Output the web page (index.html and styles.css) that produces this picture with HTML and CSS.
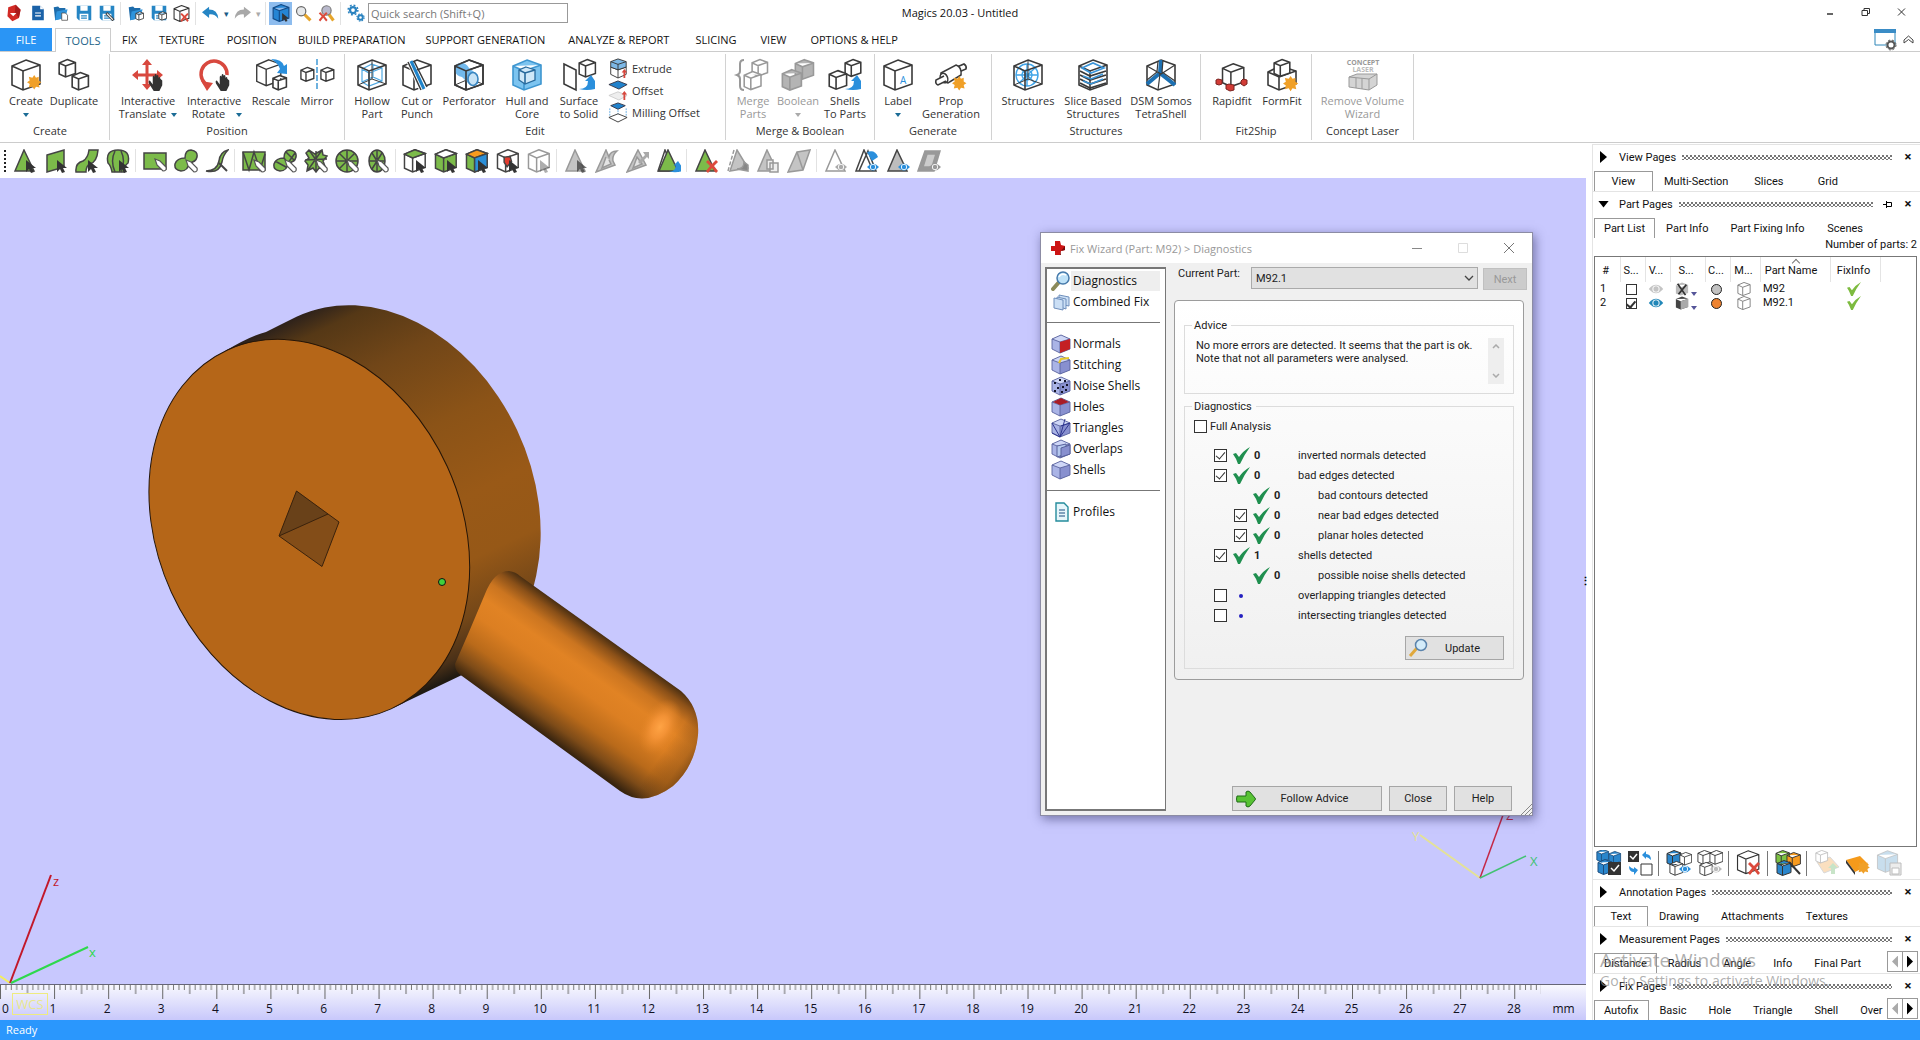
FILE: index.html
```html
<!DOCTYPE html>
<html lang="en">
<head>
<meta charset="utf-8">
<title>Magics 20.03 - Untitled</title>
<link rel="stylesheet" href="styles.css">
</head>
<body>
<svg class="defs" aria-hidden="true">
  <defs>
    <path id="cube" d="M16 1L30 6V25L13 31L2 26V7ZM2 7L13 12L30 6M13 12V31"/>
    <path id="cube-top" d="M16 1L30 6L13 12L2 7Z"/>
    <path id="cube-left" d="M2 7L13 12V31L2 26Z"/>
    <path id="cube-right" d="M13 12L30 6V25L13 31Z"/>
    <path id="cursor" d="M0 0V12L3 9L5 13L8 12L6 8H10Z" fill="#333" stroke="none"/>
    <path id="pen" d="M0 0L2 6L8 12Q12 12 11 8L5 2Z" fill="#fff" stroke="#555" stroke-width="1.2"/>
    <path id="star" d="M8 0L10 3L13 2L13 6L16 8L13 10L14 14L10 13L8 16L6 13L2 14L3 10L0 8L3 6L2 2L6 3Z" fill="#f0a028" stroke="none"/>
    <path id="swoosh" d="M0 14Q9 14 9 6H6L12 0L16 6V14Q8 16 0 14Z" fill="#2a8fdc" stroke="none"/>
    <path id="hand" d="M2 8L5 12V4Q6 2 7 4V9V2Q8 0 9 2V9V3Q11 1 11 4V9V5Q13 3 13 6L15 8V13L12 19H6L1 11Q0 8 2 8Z" fill="#333" stroke="none"/>
    <g id="eye"><path d="M0 5Q6 -2 12 5Q6 12 0 5Z"/><circle cx="6" cy="5" r="3" fill="#fff"/><circle cx="6" cy="5" r="2.2"/></g>
    <path id="cross" d="M0 2L2 0L6 4L10 0L12 2L8 6L12 11L10 13L6 8L2 13L0 11L4 6Z" fill="#dc4a3c" stroke="none"/>
    <path id="tri" d="M11 1L21 22H2Z"/>
    <g id="floppy"><path d="M1 1H21V21H4L1 18Z" fill="#2585c4"/><path d="M6 1H16V8H6ZM5 12H17V21H5Z" fill="#fff"/><path d="M7 15H15M7 18H15" stroke="#2585c4" stroke-width="1.5"/></g>
    <g id="folder"><path d="M1 3L7 2L9 4H17V8L11 19L3 21Z" fill="#1d6cab"/><path d="M5 9L20 6L17 18L3 21Z" fill="#2f94dc"/></g>
    <path id="tick" d="M0 7L3 6L6 10Q10 4 17 0Q11 8 7 17H5Q3 11 0 7Z"/>
    <g id="wizcube"><path d="M10 1L19 5V15L9 19L1 15V5Z" fill="#aab4e6"/><path d="M10 1L19 5L9 8L1 5Z" fill="#ced6f6"/><path d="M9 8L19 5V15L9 19Z" fill="#8890cf"/><path d="M10 1L19 5V15L9 19L1 15V5ZM1 5L9 8L19 5M9 8V19" fill="none" stroke="#59629d" stroke-width=".9"/></g>
    <g id="lens"><path d="M9 10L2 18" stroke="#8b8a5a" stroke-width="4" stroke-linecap="round"/><circle cx="12" cy="7" r="6" fill="#bfe2f8" stroke="#477aab" stroke-width="1.5"/><path d="M8 6Q10 2 15 4" fill="none" stroke="#fff" stroke-width="1.5"/></g>
  </defs>
</svg>

<div class="app">
  <header class="titlebar">
    <div class="quick">
      <span class="app-icon"><svg width="18" height="18" viewBox="0 0 22 22"><path d="M4 4L13 1L19 7L17 17L9 21L3 15Z" fill="#d22a25"/><path d="M13 1L19 7L17 17L12 10Z" fill="#a81b1b"/><path d="M6 11H14L10 15Z" fill="#fff"/></svg></span>
      <button class="qb" aria-label="New"><svg width="16" height="16" viewBox="0 0 22 22"><path d="M3 1H14L19 6V21H3Z" fill="#1b62a8"/><path d="M14 1V6H19" fill="#fff"/><path d="M7 11H15M7 15H15" stroke="#fff" stroke-width="1.6"/></svg></button>
      <button class="qb" aria-label="Open"><svg width="16" height="16" viewBox="0 0 22 22"><use href="#folder"/><path d="M12 11H17L20 14V21H12Z" fill="#fff" stroke="#444"/></svg></button>
      <button class="qb" aria-label="Save"><svg width="16" height="16" viewBox="0 0 22 22"><use href="#floppy"/></svg></button>
      <button class="qb" aria-label="Save as"><svg width="16" height="16" viewBox="0 0 22 22"><use href="#floppy"/><path d="M10 11L20 21" stroke="#444" stroke-width="4"/><path d="M11 12L19 20" stroke="#fff" stroke-width="1.5"/></svg></button>
      <i class="vsep"></i>
      <button class="qb" aria-label="Import part"><svg width="16" height="16" viewBox="0 0 22 22"><use href="#folder"/><use href="#cube" transform="translate(10 9) scale(.38)" fill="#fff" stroke="#333" stroke-width="3"/></svg></button>
      <button class="qb" aria-label="Save part"><svg width="16" height="16" viewBox="0 0 22 22"><use href="#floppy"/><use href="#cube" transform="translate(10 9) scale(.38)" fill="#fff" stroke="#333" stroke-width="3"/></svg></button>
      <button class="qb" aria-label="Unload part"><svg width="17" height="17" viewBox="0 0 32 32"><use href="#cube" fill="#fff" stroke="#333" stroke-width="2"/><use href="#cross" transform="translate(14 15) scale(1.3)"/></svg></button>
      <i class="vsep"></i>
      <button class="qb" aria-label="Undo"><svg width="17" height="14" viewBox="0 0 24 18"><path d="M0 8L10 0V4Q22 4 23 17Q18 10 10 11V16Z" fill="#2585c4"/></svg></button><span class="qcaret">▾</span>
      <button class="qb" aria-label="Redo"><svg width="17" height="14" viewBox="0 0 24 18"><path d="M24 8L14 0V4Q2 4 1 17Q6 10 14 11V16Z" fill="#a8a8a8"/></svg></button><span class="qcaret off">▾</span>
      <i class="vsep"></i>
      <button class="qb on" aria-label="Select parts"><svg width="18" height="18" viewBox="0 0 32 32"><use href="#cube" fill="#2585d4" stroke="#134a86" stroke-width="2"/><use href="#cursor" transform="translate(18 16) scale(1.2)"/></svg></button>
      <button class="qb" aria-label="Zoom"><svg width="17" height="17" viewBox="0 0 22 22"><path d="M12 12L20 20" stroke="#e6a52c" stroke-width="4"/><circle cx="8" cy="8" r="6" fill="#e6e8ea" stroke="#666" stroke-width="1.5"/></svg></button>
      <button class="qb" aria-label="Unzoom"><svg width="17" height="17" viewBox="0 0 22 22"><path d="M14 12L20 20" stroke="#e6a52c" stroke-width="4"/><circle cx="11" cy="7" r="6" fill="#b9b9cc" stroke="#777" stroke-width="1.5"/><use href="#cross" transform="translate(1 9) scale(.95)"/></svg></button>
      <i class="vsep"></i>
      <button class="qb" aria-label="Settings"><svg width="18" height="18" viewBox="0 0 24 24"><g fill="none" stroke="#2b83c0"><circle cx="8" cy="8" r="4" stroke-width="3"/><circle cx="8" cy="8" r="6.500" stroke-width="2" stroke-dasharray="2.500 2.600"/><circle cx="18" cy="18" r="3" stroke-width="2.500"/><circle cx="18" cy="18" r="4.800" stroke-width="1.600" stroke-dasharray="2 1.800"/></g></svg></button>
      <input class="search" type="text" placeholder="Quick search (Shift+Q)" aria-label="Quick search">
    </div>
    <div class="title">Magics 20.03 - Untitled</div>
    <div class="winbtns">
      <button aria-label="Minimize"><svg width="10" height="10"><path d="M2 7H8" stroke="#333" stroke-width="1.5"/></svg></button>
      <button aria-label="Restore"><svg width="10" height="10" fill="none" stroke="#333"><path d="M1 3.500H6.500V8.500H1ZM3 3V1.500H8.500V6.500H7"/></svg></button>
      <button aria-label="Close window"><svg width="10" height="10" stroke="#333"><path d="M1 1.500L8 8.500M8 1.500L1 8.500"/></svg></button>
    </div>
  </header>

  <nav class="tabs">
    <button class="file">FILE</button>
    <button class="tab active">TOOLS</button>
    <button class="tab">FIX</button>
    <button class="tab">TEXTURE</button>
    <button class="tab">POSITION</button>
    <button class="tab long">BUILD PREPARATION</button>
    <button class="tab long">SUPPORT GENERATION</button>
    <button class="tab late">ANALYZE &amp; REPORT</button>
    <button class="tab late">SLICING</button>
    <button class="tab">VIEW</button>
    <button class="tab late">OPTIONS &amp; HELP</button>
    <div class="tab-tools">
      <svg width="23" height="24" viewBox="0 0 23 24"><path d="M1 2H21V17H1Z" fill="#fff" stroke="#2f86b8"/><path d="M0 1H22V5H0Z" fill="#3a8cc6"/><circle cx="17" cy="17" r="3.500" fill="#fff" stroke="#555" stroke-width="2"/><circle cx="17" cy="17" r="5" fill="none" stroke="#555" stroke-dasharray="2 2"/></svg>
      <svg width="11" height="10" viewBox="0 0 11 10"><path d="M1 5L5.500 1L10 5V8L5.500 4.500L1 8Z" fill="none" stroke="#444"/></svg>
    </div>
  </nav>

  <section class="ribbon">
    <div class="group first"><div class="row">
      <button class="rb w48"><svg viewBox="0 0 32 32"><use href="#cube"/><use href="#star" transform="translate(17 16) scale(.9)"/></svg><span>Create<br><i class="caret"></i></span></button>
      <button class="rb w48"><svg viewBox="0 0 32 32"><use href="#cube" transform="scale(.58)" stroke-width="2.800"/><use href="#cube" transform="translate(13 13) scale(.58)" stroke-width="2.800"/></svg><span>Duplicate</span></button>
    </div><h2>Create</h2></div>

    <div class="group"><div class="row">
      <button class="rb w66"><svg viewBox="0 0 32 32"><path d="M15 0L20 6H16.500V14.500H25V11L31 16L25 21V17.500H16.500V25H20L15 31L10 25H13.500V17.500H6V21L0 16L6 11V14.500H13.500V6H10Z" fill="#d8483e" stroke="none"/><use href="#hand" transform="translate(16 14) scale(.95)"/></svg><span>Interactive<br>Translate<i class="caret inline"></i></span></button>
      <button class="rb w66"><svg viewBox="0 0 32 32"><path d="M11 27A13 13 0 1 1 29 16" fill="none" stroke="#d8483e" stroke-width="3.500"/><path d="M3 22L15 24L9 32Z" fill="#d8483e" stroke="none"/><use href="#hand" transform="translate(17 14) scale(.95)"/></svg><span>Interactive<br>&nbsp; Rotate &nbsp;<i class="caret inline"></i></span></button>
      <button class="rb w48"><svg viewBox="0 0 32 32"><use href="#cube" transform="scale(.86)"/><use href="#cube" transform="translate(17 16) scale(.48)" stroke-width="3.300"/><path d="M16 0Q27 0 29 7L32 5V15L22 14L25 10Q23 4 16 0Z" fill="#2a8fdc" stroke="none"/></svg><span>Rescale</span></button>
      <button class="rb w44"><svg viewBox="0 0 32 32"><use href="#cube" transform="translate(-1 8) scale(.46)" stroke-width="3"/><use href="#cube" transform="translate(19 8) scale(.46)" stroke-width="3"/><path d="M16 0V32" stroke="#4a9fd8" stroke-dasharray="6 2"/></svg><span>Mirror</span></button>
    </div><h2>Position</h2></div>

    <div class="group"><div class="row">
      <button class="rb w44"><svg viewBox="0 0 32 32"><g fill="none" stroke="#4fa8e2" stroke-width="1.200"><path d="M16 5L26 9V22L13 27L6 23V10ZM6 10L13 14L26 9M13 14V27M6 23L17 18L26 22M17 18V5"/></g><use href="#cube" fill="none"/><path d="M2 26L16 20L30 25M16 20V1" fill="none" stroke-width="1"/></svg><span>Hollow<br>Part</span></button>
      <button class="rb w46"><svg viewBox="0 0 32 32"><use href="#cube"/><path d="M5 2L18 31H27L11 2Z" fill="#fff" stroke="none"/><path d="M7 3L20 31M13 2L26 28" stroke-width="1.500"/><path d="M10 2L23 30" stroke="#1f84ca" stroke-width="3"/></svg><span>Cut or<br>Punch</span></button>
      <button class="rb w58"><svg viewBox="0 0 32 32"><use href="#cube"/><path d="M2 26L16 20L30 25" fill="none" stroke-width="1"/><path d="M4 5Q12 2 16 9L25 16V25L17 26L9 18Q3 17 2 12Z" fill="#72b9ec" stroke="none"/><ellipse cx="20" cy="20" rx="5" ry="6.500" fill="#c7e3f6" stroke="#3a86c0"/><use href="#cube" fill="none"/></svg><span>Perforator</span></button>
      <button class="rb w58"><svg viewBox="0 0 32 32"><use href="#cube" fill="#7cc4f0" stroke="#3e96d0"/><path d="M15 8L24 11V21L14 25L8 21V11Z" fill="#cfe8f8" stroke="#286a9c" stroke-width="1.300"/><path d="M8 11L14 14L24 11M14 14V25" fill="none" stroke="#286a9c"/></svg><span>Hull and<br>Core</span></button>
      <button class="rb w46"><svg viewBox="0 0 32 32"><path d="M1 5L13 11V31L1 25Z" fill="#fff"/><use href="#cube" transform="translate(15 0) scale(.58)" stroke-width="2.600"/><use href="#swoosh" transform="translate(16 16)"/></svg><span>Surface<br>to Solid</span></button>
      <div class="stack">
        <button><svg viewBox="0 0 22 22"><path d="M3 10L11 13L20 10V18L11 22L3 18ZM11 13V22"/><path d="M3 4L11 1L20 4V10L11 13L3 10Z" fill="#7db8e6"/><path d="M3 4L11 7L20 4M11 7V13" fill="none"/><path d="M17 22V16H15L18 12L21 16H19V22Z" fill="#d8483e" stroke="none"/></svg>Extrude</button>
        <button><svg viewBox="0 0 22 22"><path d="M1 5L11 1L21 5L12 10Z" fill="#2182cc" stroke="#334"/><path d="M1 17L11 13L21 17L12 22Z" fill="#eee" stroke="#ccc"/><path d="M17 22V16H15L18 12L21 16H19V22Z" fill="#d8483e" stroke="none"/></svg>Offset</button>
        <button><svg viewBox="0 0 22 22"><path d="M3 4L11 1L19 4L11 8Z" fill="#2182cc" stroke="#334"/><path d="M2 7V16M20 7V16M11 9V14" stroke="#5fa9e2" stroke-dasharray="2 1"/><path d="M1 17L11 13L21 17L11 22Z" fill="#fff"/></svg>Milling Offset</button>
      </div>
    </div><h2>Edit</h2></div>

    <div class="group"><div class="row">
      <button class="rb w44 off"><svg viewBox="0 0 32 32"><path d="M7 1Q3 1 3 5V12Q3 15 0 16Q3 17 3 20V27Q3 31 7 31" fill="none" stroke-width="2"/><use href="#cube" transform="translate(14 0) scale(.55)" stroke-width="2.800"/><use href="#cube" transform="translate(6 12) scale(.6)" stroke-width="2.600"/></svg><span>Merge<br>Parts</span></button>
      <button class="rb w46 off"><svg viewBox="0 0 32 32"><use href="#cube" transform="translate(12 0) scale(.65)" stroke-width="2.400" fill="#b4b4b4"/><use href="#cube" transform="translate(-1 10) scale(.68)" stroke-width="2.400" fill="#b4b4b4"/></svg><span>Boolean<br><i class="caret"></i></span></button>
      <button class="rb w48"><svg viewBox="0 0 32 32"><use href="#cube" transform="translate(15 0) scale(.56)" stroke-width="2.800"/><use href="#cube" transform="translate(-1 11) scale(.62)" stroke-width="2.600"/><use href="#swoosh" transform="translate(16 16)"/></svg><span>Shells<br>To Parts</span></button>
    </div><h2>Merge &amp; Boolean</h2></div>

    <div class="group"><div class="row">
      <button class="rb w36"><svg viewBox="0 0 32 32"><use href="#cube"/><text x="18" y="25" class="icon-a">A</text></svg><span>Label<br><i class="caret"></i></span></button>
      <button class="rb w70"><svg viewBox="0 0 32 32"><g fill="#fff" stroke-width="1.600"><path d="M22 8L29 5Q32 7 31 10L24 13Z"/><path d="M6 14L21 6Q27 8 26 16L13 24Q5 22 6 14Z"/><ellipse cx="9" cy="19" rx="3.500" ry="5" transform="rotate(-25 9 19)"/><path d="M9 17L1 21Q0 25 3 26L11 22"/></g><use href="#star" transform="translate(17 17) scale(.9)"/></svg><span>Prop<br>Generation</span></button>
    </div><h2>Generate</h2></div>

    <div class="group"><div class="row">
      <button class="rb w62"><svg viewBox="0 0 32 32"><g fill="none" stroke="#3fa4e8" stroke-width="1.400"><circle cx="15" cy="16" r="11"/><circle cx="15" cy="16" r="5"/><path d="M7 8L23 24M7 24L24 8M15 5V27M4 16H26"/></g><use href="#cube" fill="none"/><path d="M2 26L16 20L30 25M16 20V1" fill="none" stroke-width="1"/></svg><span>Structures</span></button>
      <button class="rb w68"><svg viewBox="0 0 32 32"><use href="#cube"/><g stroke-width="1.800"><path d="M3 20L13 25L29 20M3 24L13 29L29 24M3 16L13 21L29 16M3 12L13 17L29 12" fill="none"/></g><path d="M5 9L16 4L27 9L14 14ZM6 17L14 20L26 15M6 22L14 25L26 20" fill="none" stroke="#3a94d8" stroke-width="1.600"/></svg><span>Slice Based<br>Structures</span></button>
      <button class="rb w68"><svg viewBox="0 0 32 32"><path d="M16 1L30 6V25L13 31L2 26V7Z" fill="#fff"/><path d="M16 1L15 14L30 26M15 14L2 25" fill="none" stroke="#1c70b2" stroke-width="4"/><path d="M2 7L16 15L30 6M15 15L13 31M18 1L17 13L30 22M13 2L12 13L2 21" fill="none" stroke-width="1.200"/></svg><span>DSM Somos<br>TetraShell</span></button>
    </div><h2>Structures</h2></div>

    <div class="group"><div class="row">
      <button class="rb w52"><svg viewBox="0 0 32 32"><use href="#cube" transform="translate(5 4) scale(.76)" stroke-width="2"/><g fill="#d23c36" stroke="#7b2320" stroke-width="1"><path d="M2 20L6 21V25L3 26L0 25V21ZM27 20L31 21V25L28 27L25 25V22ZM13 25L18 26V31L14 32L10 30V26Z"/></g></svg><span>Rapidfit</span></button>
      <button class="rb w48"><svg viewBox="0 0 32 32"><path d="M14 7L30 12V25L13 31L2 26V13Z" fill="#fff"/><path d="M2 13L13 18L30 12M13 18V31" fill="none"/><use href="#cube" transform="translate(7 0) scale(.56)" stroke-width="2.800"/><use href="#star" transform="translate(17 17) scale(.95)"/></svg><span>FormFit</span></button>
    </div><h2>Fit2Ship</h2></div>

    <div class="group"><div class="row">
      <button class="rb w91 off"><svg viewBox="0 0 32 32"><text x="16" y="6" class="concept">CONCEPT</text><text x="16" y="13" class="concept light">LASER</text><path d="M2 18L10 15H30V26L22 31L2 28Z" fill="#d4d4d4" stroke-width="1"/><path d="M2 18L22 20L30 15M22 20V31M9 19V29M15 19V30" fill="none" stroke-width="1"/></svg><span>Remove Volume<br>Wizard</span></button>
    </div><h2>Concept Laser</h2></div>
  </section>

  <main class="main">
    <div class="left">
      <div class="marking">
        <i class="grip"></i>
        <button aria-label="Mark triangle"><svg viewBox="0 0 24 24"><use href="#tri"/><use href="#cursor" transform="translate(13 11)"/></svg></button>
        <button aria-label="Mark plane"><svg viewBox="0 0 24 24"><path d="M3 6L20 1V18L3 23Z"/><use href="#cursor" transform="translate(13 11)"/></svg></button>
        <button aria-label="Mark surface"><svg viewBox="0 0 24 24"><path d="M1 23Q0 14 8 12Q13 9 14 1H23Q22 13 15 15Q11 17 11 23Z"/><use href="#cursor" transform="translate(13 11)"/></svg></button>
        <button aria-label="Mark shell"><svg viewBox="0 0 24 24"><path d="M6 23Q5 17 2 14Q-1 1 12 1Q25 1 22 14Q18 17 18 23Z"/><path d="M9 2Q4 12 9 23M15 2Q20 12 15 23" fill="none"/><use href="#cursor" transform="translate(13 11)"/></svg></button>
        <i class="vsep"></i>
        <button aria-label="Rectangle"><svg viewBox="0 0 24 24"><path d="M1 4H23V20H1Z"/><use href="#pen" transform="translate(12 10)"/></svg></button>
        <button aria-label="Free form"><svg viewBox="0 0 24 24"><path d="M11 9Q11 1 17 1Q24 2 23 8Q22 13 15 14Q14 22 7 22Q0 21 1 15Q3 9 11 9Z"/><use href="#pen" transform="translate(12 11)"/></svg></button>
        <button aria-label="Brush"><svg viewBox="0 0 24 24"><path d="M1 22Q12 22 14 12Q15 3 23 1Q18 6 17 13Q14 25 1 22Z"/><path d="M14 14L22 22" stroke-width="2"/></svg></button>
        <i class="vsep"></i>
        <button aria-label="Window triangles"><svg viewBox="0 0 24 24"><path d="M1 3H23V21H1Z"/><path d="M1 3L7 21L12 3L18 21L23 5" fill="none"/><use href="#pen" transform="translate(12 11)"/></svg></button>
        <button aria-label="Free form triangles"><svg viewBox="0 0 24 24"><path d="M11 9Q11 1 17 1Q24 2 23 8Q22 13 15 14Q14 22 7 22Q0 21 1 15Q3 9 11 9ZM11 9L15 14M13 3L22 12M2 12L13 18M15 14L22 4"/><use href="#pen" transform="translate(12 11)"/></svg></button>
        <button aria-label="Star triangles"><svg viewBox="0 0 24 24"><path d="M5 1L11 5L18 1L19 6L23 7L19 12L22 20L15 19L12 23L9 19L3 22L4 16L1 12L5 9L2 4ZM5 1L19 21M18 1L4 21M1 11L23 10M12 2V23"/><use href="#pen" transform="translate(12 11)"/></svg></button>
        <button aria-label="Disc triangles"><svg viewBox="0 0 24 24"><circle cx="12" cy="12" r="11"/><path d="M12 1V23M1 12H23M4 4L20 20M20 4L4 20"/><use href="#pen" transform="translate(12 11)"/></svg></button>
        <button aria-label="Ellipse triangles"><svg viewBox="0 0 24 24"><ellipse cx="11" cy="12" rx="8" ry="11"/><path d="M11 1V23M3 12H19M6 4L16 20M16 4L6 20"/><use href="#pen" transform="translate(11 11)"/></svg></button>
        <i class="vsep"></i>
        <button aria-label="Cube top"><svg viewBox="0 0 24 24"><g transform="scale(.74)" stroke-width="2"><use href="#cube" fill="#fff"/><use href="#cube-top"/></g><use href="#cursor" transform="translate(13 11)"/></svg></button>
        <button aria-label="Cube sides"><svg viewBox="0 0 24 24"><g transform="scale(.74)" stroke-width="2"><use href="#cube"/><use href="#cube-top" fill="#fff"/></g><use href="#cursor" transform="translate(13 11)"/></svg></button>
        <button aria-label="Cube colours"><svg viewBox="0 0 24 24"><g transform="scale(.74)" stroke-width="2"><use href="#cube"/><use href="#cube-top" fill="#f79a1e"/><use href="#cube-right" fill="#2b8fd8"/></g><use href="#cursor" transform="translate(13 11)"/></svg></button>
        <button aria-label="Cube inner"><svg viewBox="0 0 24 24"><g transform="scale(.74)" stroke-width="2"><use href="#cube" fill="#fff"/><path d="M11 11L19 10L21 17L15 24L11 18Z" fill="#e23b2e"/></g><use href="#cursor" transform="translate(13 11)"/></svg></button>
        <button class="gray" aria-label="Cube none"><svg viewBox="0 0 24 24"><g transform="scale(.74)" stroke-width="2"><use href="#cube" fill="#fff"/></g><use href="#cursor" transform="translate(13 11)" opacity=".4"/></svg></button>
        <i class="vsep"></i>
        <button class="gray" aria-label="Unmark"><svg viewBox="0 0 24 24"><use href="#tri"/><use href="#cursor" transform="translate(13 11)" opacity=".7"/></svg></button>
        <button class="gray" aria-label="Shrink"><svg viewBox="0 0 24 24"><path d="M11 1L14 8Q15 2 22 2Q17 6 18 12L20 16L1 23Z"/><path d="M11 8L7 19L16 15L14 11" fill="#e4e4e4"/></svg></button>
        <button class="gray" aria-label="Grow"><svg viewBox="0 0 24 24"><path d="M12 1L20 16L1 23Z"/><path d="M11 8L7 19L16 15Z" fill="#e4e4e4"/><path d="M12 13L19 6L17 3H23V10L21 8L14 15Z" fill="#aaa" stroke="none"/></svg></button>
        <button aria-label="Invert"><svg viewBox="0 0 24 24"><path d="M8 1L17 22H1Z" fill="#fff"/><use href="#tri"/><use href="#swoosh" transform="translate(12 12) scale(.75)"/></svg></button>
        <i class="vsep"></i>
        <button aria-label="Delete marked"><svg viewBox="0 0 24 24"><use href="#tri"/><use href="#cross" transform="translate(12 11)"/></svg></button>
        <button class="gray" aria-label="Separate"><svg viewBox="0 0 24 24"><path d="M9 1L3 22" stroke-dasharray="4 2"/><path d="M12 1L23 19L5 22Z"/><path d="M12 20Q19 20 19 13L23 16V22Z" fill="#888"/></svg></button>
        <button class="gray" aria-label="Copy"><svg viewBox="0 0 24 24"><use href="#tri"/><path d="M11 11H17V20H11ZM14 14H22V23H14Z" fill="#eee"/></svg></button>
        <button class="gray" aria-label="Mirror"><svg viewBox="0 0 24 24"><path d="M10 3L23 1L16 21L1 23ZM10 3L16 21"/></svg></button>
        <i class="vsep"></i>
        <button class="gray" aria-label="Hide"><svg viewBox="0 0 24 24"><use href="#tri" fill="#fff"/><use href="#eye" transform="translate(11 13)" fill="#aaa" stroke="none"/></svg></button>
        <button aria-label="Invert visible"><svg viewBox="0 0 24 24"><path d="M9 1L18 22H1ZM13 2L21 22H4Z" fill="#fff"/><path d="M12 3Q20 0 23 8L17 12Z" fill="#2a8fdc" stroke="none"/><use href="#eye" transform="translate(12 13)" fill="#2a8fdc" stroke="none"/></svg></button>
        <button aria-label="Show"><svg viewBox="0 0 24 24"><use href="#tri" fill="#bdbdbd"/><use href="#eye" transform="translate(12 13)" fill="#2a8fdc" stroke="none"/></svg></button>
        <button class="gray" aria-label="Show plane"><svg viewBox="0 0 24 24"><path d="M8 2H23L17 22H1Z" fill="#999"/><path d="M10 5H19L15 18H6Z" fill="#ccc"/><use href="#eye" transform="translate(12 13)" fill="#999" stroke="none"/></svg></button>
      </div>

      <div class="viewport">
        <svg class="scene" role="img" aria-label="3D part view">
          <defs>
            <linearGradient id="rim" gradientUnits="userSpaceOnUse" x1="225" y1="350" x2="395" y2="705">
              <stop offset="0" stop-color="#2c211b"/><stop offset=".06" stop-color="#553816"/><stop offset=".2" stop-color="#714618"/><stop offset=".4" stop-color="#8b5317"/><stop offset=".6" stop-color="#995917"/><stop offset=".75" stop-color="#965817"/><stop offset=".88" stop-color="#744718"/><stop offset=".96" stop-color="#4b3118"/><stop offset="1" stop-color="#201a12"/>
            </linearGradient>
            <linearGradient id="rod" gradientUnits="userSpaceOnUse" x1="600" y1="633" x2="533" y2="727">
              <stop offset="0" stop-color="#4a2f12"/><stop offset=".08" stop-color="#8a5018"/><stop offset=".2" stop-color="#cb7520"/><stop offset=".34" stop-color="#e18324"/><stop offset=".5" stop-color="#dc7f22"/><stop offset=".72" stop-color="#b96a1a"/><stop offset=".88" stop-color="#7d4b18"/><stop offset="1" stop-color="#38240f"/>
            </linearGradient>
            <linearGradient id="capshade" gradientUnits="userSpaceOnUse" x1="668" y1="745" x2="702" y2="769">
              <stop offset="0" stop-color="#5a3510" stop-opacity="0"/><stop offset=".5" stop-color="#7a4814" stop-opacity=".4"/><stop offset="1" stop-color="#4a2c10" stop-opacity=".95"/>
            </linearGradient>
            <radialGradient id="glow" gradientUnits="userSpaceOnUse" cx="0" cy="0" r="30" gradientTransform="translate(660 727) rotate(-62) scale(1 .62)">
              <stop offset="0" stop-color="#ffa445"/><stop offset=".4" stop-color="#f9973a" stop-opacity=".8"/><stop offset="1" stop-color="#e38425" stop-opacity="0"/>
            </radialGradient>
            <path id="rodshape" d="M455 664Q470 630 485 594Q494 571 509 571Q516 572 520 576L681 691Q700 708 698 735Q695 766 673 786Q644 808 620 791L462 676Q455 672 455 664Z"/>
          </defs>
          <g transform="translate(0 -178)">
            <path d="M225.500 350.800Q250 336 266 332Q280 325 296.500 316.800A197.200 151.600 65.500 0 1 464 674L393 708Z" fill="url(#rim)"/>
            <ellipse cx="309.300" cy="529.400" rx="197.200" ry="151.600" transform="rotate(65.500 309.300 529.400)" fill="#b56618" stroke="#241508"/>
            <path d="M296.500 491L339 522L322 566.500L279 536Z" fill="#834d18"/>
            <path d="M296.500 491L328 514L279 536Z" fill="#694119"/>
            <path d="M296.500 491L339 522L322 566.500L279 536ZM279 536L328 514" fill="none" stroke="#3a220c"/>
            <use href="#rodshape" fill="url(#rod)"/>
            <use href="#rodshape" fill="url(#capshade)"/>
            <use href="#rodshape" fill="url(#glow)"/>
            <circle cx="442" cy="582" r="3.500" fill="#3fd03c" stroke="#111"/>
            <path d="M0 976L10 983" stroke="#f3ee5a" stroke-width="2"/>
            <path d="M10 983L51 875" stroke="#c2182a" stroke-width="2"/>
            <path d="M11 983L88 947" stroke="#2ed84c" stroke-width="2"/>
            <text x="53" y="886" class="axis" fill="#c2182a">z</text>
            <text x="89" y="957" class="axis" fill="#2ed84c">x</text>
          </g>
        </svg>
        <svg class="axes" width="140" height="75">
          <path d="M75 63L15 20" stroke="#e4e296" stroke-width="2"/><path d="M75 63L98 0" stroke="#c42846" stroke-width="1.500"/><path d="M75 63L121 41" stroke="#42c272" stroke-width="1.500"/>
          <text x="7" y="26" class="axis" fill="#e4e296">Y</text><text x="125" y="51" class="axis" fill="#42c272">X</text><text x="101" y="5" class="axis" fill="#c42846">Z</text>
        </svg>
        <i class="splitter">⋮</i>

        <section class="dialog" aria-label="Fix Wizard">
          <header>
            <svg width="14" height="14" viewBox="0 0 14 14"><path d="M4 0H9L10 4L14 5V9L10 10L9 14H4V10H0V5H4Z" fill="#cc1414"/><path d="M10 10V14H9ZM14 5V9L10 10Z" fill="#7c0a0a"/></svg>
            <span>Fix Wizard (Part: M92) &gt; Diagnostics</span>
            <button aria-label="Minimize dialog"><svg width="12" height="12"><path d="M1 6.500H11" stroke="#888"/></svg></button>
            <button aria-label="Maximize dialog"><svg width="12" height="12"><path d="M1.500 1.500H10.500V10.500H1.500Z" fill="none" stroke="#ddd"/></svg></button>
            <button aria-label="Close dialog"><svg width="12" height="12"><path d="M1 1L11 11M11 1L1 11" stroke="#777"/></svg></button>
          </header>
          <div class="dbody">
            <nav class="wiz">
              <a href="#" class="sel"><svg viewBox="0 0 20 20"><use href="#lens"/></svg><span>Diagnostics</span></a>
              <a href="#"><svg viewBox="0 0 20 20"><g fill="#cbdff5" stroke="#6f8fbc"><path d="M8 3L18 5V14L8 12Z"/><path d="M6 5L15 7V17L6 14Z"/><path d="M3 6L12 8V18L3 16Z"/></g></svg><span>Combined Fix</span></a>
              <hr>
              <a href="#"><svg viewBox="0 0 20 20"><use href="#wizcube"/><path d="M9 8L19 5V15L9 19Z" fill="#c41f24"/></svg><span>Normals</span></a>
              <a href="#"><svg viewBox="0 0 20 20"><use href="#wizcube"/><path d="M8 8L10 4L18 3" fill="none" stroke="#e6c62a" stroke-width="2"/></svg><span>Stitching</span></a>
              <a href="#"><svg viewBox="0 0 20 20"><use href="#wizcube"/><path d="M3 6H5V8H3ZM6 11H8V13H6ZM3 14H5V16H3ZM11 10H13V12H11ZM15 8H17V10H15ZM14 13H16V15H14ZM8 3H10V5H8ZM13 4H15V6H13ZM10 15H12V17H10Z" fill="#15152a"/></svg><span>Noise Shells</span></a>
              <a href="#"><svg viewBox="0 0 20 20"><use href="#wizcube"/><path d="M10 1L18 5L9 8L2 5Z" fill="#a81c26"/></svg><span>Holes</span></a>
              <a href="#"><svg viewBox="0 0 20 20"><use href="#wizcube"/><path d="M1 5L9 19L14 1M10 8L19 5L9 19L1 15" fill="none" stroke="#2f3690"/></svg><span>Triangles</span></a>
              <a href="#"><svg viewBox="0 0 20 20"><use href="#wizcube"/><path d="M6 7L15 5V15L6 18Z" fill="#b5c8ee" stroke="#59629d"/><path d="M10 9L19 6V15L10 18Z" fill="#8890cf" stroke="#59629d"/></svg><span>Overlaps</span></a>
              <a href="#"><svg viewBox="0 0 20 20"><use href="#wizcube"/></svg><span>Shells</span></a>
              <hr>
              <a href="#"><svg viewBox="0 0 20 20"><path d="M5 1H13L17 5V19H5Z" fill="#e6f6fb" stroke="#258c9c" stroke-width="1.400"/><path d="M8 8H14M8 11H14M8 14H14" stroke="#1b4d80" stroke-width="1.200"/></svg><span>Profiles</span></a>
            </nav>
            <div class="content">
              <div class="current">
                <label for="part">Current Part:</label>
                <span class="selwrap"><select id="part"><option>M92.1</option></select><svg width="10" height="6"><path d="M1 1L5 5L9 1" fill="none" stroke="#444" stroke-width="1.300"/></svg></span>
                <button class="btn next" disabled>Next</button>
              </div>
              <div class="panel">
                <fieldset class="advice"><legend>Advice</legend>
                  <p>No more errors are detected. It seems that the part is ok.<br>Note that not all parameters were analysed.</p>
                  <div class="sb"><svg width="8" height="5"><path d="M1 4L4 1L7 4"/></svg><svg width="8" height="5"><path d="M1 1L4 4L7 1"/></svg></div>
                </fieldset>
                <fieldset class="diag"><legend>Diagnostics</legend>
                  <label class="full"><input type="checkbox">Full Analysis</label>
                  <ul>
                    <li><label><input type="checkbox" checked><svg class="ok"><use href="#tick"/></svg><b>0</b><span>inverted normals detected</span></label></li>
                    <li><label><input type="checkbox" checked><svg class="ok"><use href="#tick"/></svg><b>0</b><span>bad edges detected</span></label></li>
                    <li class="in"><div><i class="nobox"></i><svg class="ok"><use href="#tick"/></svg><b>0</b><span>bad contours detected</span></div></li>
                    <li class="in"><label><input type="checkbox" checked><svg class="ok"><use href="#tick"/></svg><b>0</b><span>near bad edges detected</span></label></li>
                    <li class="in"><label><input type="checkbox" checked><svg class="ok"><use href="#tick"/></svg><b>0</b><span>planar holes detected</span></label></li>
                    <li><label><input type="checkbox" checked><svg class="ok"><use href="#tick"/></svg><b>1</b><span>shells detected</span></label></li>
                    <li class="in"><div><i class="nobox"></i><svg class="ok"><use href="#tick"/></svg><b>0</b><span>possible noise shells detected</span></div></li>
                    <li><label><input type="checkbox"><svg class="ok"><circle cx="8" cy="9" r="2" fill="#2420c0"/></svg><b></b><span>overlapping triangles detected</span></label></li>
                    <li><label><input type="checkbox"><svg class="ok"><circle cx="8" cy="9" r="2" fill="#2420c0"/></svg><b></b><span>intersecting triangles detected</span></label></li>
                  </ul>
                  <button class="btn update"><svg width="20" height="20" viewBox="0 0 20 20"><path d="M9 10L2 18" stroke="#e0a83c" stroke-width="3"/><circle cx="13" cy="7" r="5.500" fill="#d4ecfa" stroke="#5b84ac" stroke-width="1.500"/></svg><span>Update</span></button>
                </fieldset>
              </div>
              <div class="actions">
                <button class="btn follow"><svg width="20" height="18" viewBox="0 0 20 18"><path d="M1 6H10V2Q12 0 14 2L19 8Q20 9 19 10L14 16Q12 18 10 16V12H1Q0 9 1 6Z" fill="#58c234" stroke="#1f6a17"/></svg><span>Follow Advice</span></button>
                <button class="btn">Close</button>
                <button class="btn">Help</button>
              </div>
            </div>
          </div>
          <svg class="resize" width="12" height="12"><path d="M1 12L12 1M5 12L12 5M9 12L12 9" stroke="#888"/></svg>
        </section>
      </div>

      <div class="ruler">
        <svg class="ticks" width="1541" height="15"><defs><pattern id="cm" width="54.080" height="15" patternUnits="userSpaceOnUse"><path d="M.5 0V14" stroke="#666"/><path d="M27.500 0V9" stroke="#666"/><path d="M5.900 0V5M11.300 0V5M16.700 0V5M22.100 0V5M32.900 0V5M38.300 0V5M43.700 0V5M49.100 0V5" stroke="#777"/></pattern></defs><rect width="1541" height="15" fill="url(#cm)"/></svg>
        <ol><li>0</li><li>1</li><li>2</li><li>3</li><li>4</li><li>5</li><li>6</li><li>7</li><li>8</li><li>9</li><li>10</li><li>11</li><li>12</li><li>13</li><li>14</li><li>15</li><li>16</li><li>17</li><li>18</li><li>19</li><li>20</li><li>21</li><li>22</li><li>23</li><li>24</li><li>25</li><li>26</li><li>27</li><li>28</li><li>mm</li></ol>
        <span class="wcs">WCS</span>
      </div>
    </div>

    <aside class="side">
      <section class="pane">
        <header><i class="play"></i><h3>View Pages</h3><i class="dots"></i><button aria-label="Close View Pages">×</button></header>
        <div class="ptabs wide"><button class="active">View</button><button>Multi-Section</button><button>Slices</button><button>Grid</button></div>
      </section>
      <section class="pane grow">
        <header><i class="play open"></i><h3>Part Pages</h3><i class="dots"></i><svg width="9" height="7"><path d="M0 3.500H3M3.500 0V7M3 1.500H8.500V5.500H3" fill="none" stroke="#000"/></svg><button aria-label="Close Part Pages">×</button></header>
        <div class="ptabs wide"><button class="active">Part List</button><button>Part Info</button><button>Part Fixing Info</button><button>Scenes</button></div>
        <p class="count">Number of parts: 2</p>
        <div class="list">
          <table>
            <colgroup><col class="c25"><col class="c25"><col class="c25"><col class="c35"><col class="c25"><col class="c30"><col class="c70"><col class="c50"><col></colgroup>
            <thead><tr><th>#</th><th>S...</th><th>V...</th><th>S...</th><th>C...</th><th>M...</th><th class="sorted">Part Name</th><th>FixInfo</th><th class="rest"></th></tr></thead>
            <tbody>
              <tr><td>1</td><td><input type="checkbox" aria-label="Select M92"></td><td><svg width="16" height="12" viewBox="0 0 12 10"><use href="#eye" fill="#c4c4c4"/></svg></td><td><span class="shade"><svg width="14" height="14" viewBox="0 0 32 32"><use href="#cube" fill="#bbb"/><path d="M6 4L24 30M26 6L8 28" stroke="#333" stroke-width="4"/></svg><i></i></span></td><td><i class="dot"></i></td><td><svg width="14" height="14" viewBox="0 0 32 32"><use href="#cube" fill="#fff" stroke="#777" stroke-width="2"/></svg></td><td class="name">M92</td><td><svg width="14" height="14" viewBox="0 0 17 17"><use href="#tick" fill="#7dbb3f"/></svg></td><td></td></tr>
              <tr><td>2</td><td><input type="checkbox" checked aria-label="Select M92.1"></td><td><svg width="16" height="12" viewBox="0 0 12 10"><use href="#eye" fill="#2187b8"/></svg></td><td><span class="shade"><svg width="14" height="14" viewBox="0 0 32 32"><use href="#cube" fill="#444"/><use href="#cube-right" fill="#aaa"/></svg><i></i></span></td><td><i class="dot orange"></i></td><td><svg width="14" height="14" viewBox="0 0 32 32"><use href="#cube" fill="#fff" stroke="#777" stroke-width="2"/></svg></td><td class="name">M92.1</td><td><svg width="14" height="14" viewBox="0 0 17 17"><use href="#tick" fill="#7dbb3f"/></svg></td><td></td></tr>
            </tbody>
          </table>
        </div>
        <div class="parttools">
          <button aria-label="Select all"><svg viewBox="0 0 26 26"><g fill="#2a86cc" stroke="#1c4c7c" stroke-width="2"><use href="#cube" transform="translate(0 -1) scale(.42)"/><use href="#cube" transform="translate(12 1) scale(.42)"/><use href="#cube" transform="translate(1 9) scale(.5)"/></g><path d="M12 12H25V25H12Z" fill="#333"/><path d="M15 18L18 21L23 15" fill="none" stroke="#fff" stroke-width="1.500"/></svg></button>
          <button aria-label="Invert selection"><svg viewBox="0 0 26 26"><path d="M1 1H12V12H1Z" fill="#333"/><path d="M3 6L6 9L10 4" fill="none" stroke="#fff" stroke-width="1.500"/><path d="M14 14H25V25H14Z" fill="#fff" stroke="#333"/><path d="M15 5L19 1V4Q24 4 24 10Q21 7 19 7V9ZM11 20L7 25V22Q2 22 2 16Q5 19 7 19V17Z" fill="#2a8fdc"/></svg></button>
          <i class="vsep"></i>
          <button aria-label="Show parts"><svg viewBox="0 0 26 26"><g fill="#fff" stroke="#333" stroke-width="2"><use href="#cube" transform="scale(.5)" fill="#2a86cc"/><use href="#cube" transform="translate(13 2) scale(.42)"/><use href="#cube" transform="translate(3 11) scale(.46)"/></g><use href="#eye" transform="translate(13 14)" fill="#2a8fdc"/></svg></button>
          <button aria-label="Hide parts"><svg viewBox="0 0 26 26"><g fill="#fff" stroke="#333" stroke-width="2"><use href="#cube" transform="scale(.46)"/><use href="#cube" transform="translate(12 0) scale(.46)"/><use href="#cube" transform="translate(2 12) scale(.44)"/></g><use href="#eye" transform="translate(13 14)" fill="#bbb"/></svg></button>
          <i class="vsep"></i>
          <button aria-label="Remove part"><svg viewBox="0 0 26 26"><use href="#cube" transform="scale(.76)" fill="#fff" stroke="#333" stroke-width="1.500"/><use href="#cross" transform="translate(12 12)"/></svg></button>
          <i class="vsep"></i>
          <button aria-label="Fix parts"><svg viewBox="0 0 26 26"><g stroke="#333" stroke-width="2"><use href="#cube" transform="scale(.48)" fill="#7cc242"/><use href="#cube" transform="translate(11 2) scale(.48)" fill="#f79a1e"/><use href="#cube" transform="translate(1 10) scale(.5)" fill="#2a86cc"/></g><path d="M14 12L25 24" stroke="#333" stroke-width="2"/></svg></button>
          <i class="vsep"></i>
          <button class="faded" aria-label="Add to scene"><svg viewBox="0 0 26 26"><path d="M3 12L16 7L25 17L10 23Z" fill="#f7c68c" stroke="#bbb"/><use href="#cube" transform="translate(1 0) scale(.42)" fill="#fff" stroke="#888" stroke-width="2"/><path d="M17 24V18H14L19 13L24 18H21V24Z" fill="#9ccf9c"/></svg></button>
          <button aria-label="New scene"><svg viewBox="0 0 26 26"><path d="M1 10L15 6L24 15L10 22Z" fill="#f59a1b"/><path d="M1 10V13L10 25V22Z" fill="#333"/><use href="#star" transform="translate(12 11) scale(.8)"/></svg></button>
          <button class="faded" aria-label="Save scene"><svg viewBox="0 0 26 26"><use href="#cube" transform="scale(.72)" fill="#9cc4e0" stroke="#888"/><path d="M14 13H25V25H14Z" fill="#ddd" stroke="#888"/><path d="M16 18H23V24H16Z" fill="#fff" stroke="#888"/></svg></button>
        </div>
      </section>
      <section class="pane">
        <header><i class="play"></i><h3>Annotation Pages</h3><i class="dots"></i><button aria-label="Close Annotation Pages">×</button></header>
        <div class="ptabs"><button class="active">Text</button><button>Drawing</button><button>Attachments</button><button>Textures</button></div>
      </section>
      <section class="pane">
        <header><i class="play"></i><h3>Measurement Pages</h3><i class="dots"></i><button aria-label="Close Measurement Pages">×</button></header>
        <div class="ptabs"><button class="active">Distance</button><button>Radius</button><button>Angle</button><button>Info</button><button>Final Part</button><span class="scroll"><button aria-label="Scroll left" disabled><i></i></button><button aria-label="Scroll right"><i></i></button></span></div>
      </section>
      <section class="pane">
        <header><i class="play"></i><h3>Fix Pages</h3><i class="dots"></i><button aria-label="Close Fix Pages">×</button></header>
        <div class="ptabs"><button class="active">Autofix</button><button>Basic</button><button>Hole</button><button>Triangle</button><button>Shell</button><button>Over</button><span class="scroll"><button aria-label="Scroll tabs left" disabled><i></i></button><button aria-label="Scroll tabs right"><i></i></button></span></div>
      </section>
      <div class="watermark"><strong>Activate Windows</strong><span>Go to Settings to activate Windows.</span></div>
    </aside>
  </main>
  <footer class="status">Ready</footer>
</div>
</body>
</html>
```
FILE: styles.css
```css
* { box-sizing: border-box; }
html, body { margin: 0; height: 100%; }
body { font: 11px/13px "Open Sans", "Noto Sans", sans-serif; color: #333; background: #fff; overflow: hidden; }
button { font: inherit; color: inherit; background: none; border: 0; padding: 0; margin: 0; }
h2, h3, p, ul, ol { margin: 0; padding: 0; font: inherit; list-style: none; }
svg { display: block; flex: none; }
.defs { position: absolute; width: 0; height: 0; }
.app { display: flex; flex-direction: column; height: 100vh; }

/* title bar */
.titlebar { display: flex; align-items: flex-start; height: 28px; flex: none; position: relative; }
.quick { display: flex; align-items: center; padding-left: 2px; height: 26px; }
.app-icon { width: 24px; display: flex; justify-content: center; }
.qb { width: 23px; height: 23px; display: flex; align-items: center; justify-content: center; flex: none; }
.qb.on { background: #8dbcee; }
.qcaret { width: 9px; font-size: 9px; color: #1b5c86; text-align: center; }
.qcaret.off { color: #aaa; }
.vsep { width: 1px; margin: 0 3px 0 2px; height: 23px; background: #e2e2e2; flex: none; }
.search { width: 200px; height: 20px; margin: 0 0 0 1px; border: 1px solid #999; padding: 0 2px; font: 11px "Open Sans", sans-serif; color: #555; outline: 0; }
.search::placeholder { color: #777; opacity: 1; }
.title { position: absolute; left: 0; right: 0; text-align: center; color: #111; pointer-events: none; line-height: 26px; }
.winbtns { margin-left: auto; display: flex; padding-right: 0; }
.winbtns button { width: 36px; height: 24px; display: flex; align-items: center; justify-content: center; }

/* ribbon tabs */
.tabs { display: flex; height: 24px; flex: none; border-bottom: 1px solid #ccc; color: #111; }
.file { width: 52px; background: #2a95f5; color: #fff; margin-right: 3px; }
.tab { padding: 0 11px; }
.tab.long { padding: 0 10px; }
.tab.late { padding: 0 13px; }
.tab.active { width: 56px; padding: 0; border: 1px solid #ccc; border-bottom: 0; margin-bottom: -1px; background: #fff; color: #1c6488; }
.tab-tools { margin-left: auto; display: flex; align-items: center; gap: 6px; padding-right: 6px; }

/* ribbon */
.ribbon { display: flex; height: 91px; flex: none; border-bottom: 1px solid #ccc; padding-top: 2px; }
.group { display: flex; flex-direction: column; height: 86px; padding: 0 5px; border-right: 1px solid #d2d2d2; color: #333; }
.group.first { padding: 0 11px 0 2px; }
.row { display: flex; height: 70px; padding-top: 5px; }
.group h2 { text-align: center; }
.rb { display: flex; flex-direction: column; align-items: center; gap: 3px; white-space: nowrap; }
.rb > svg { width: 32px; height: 32px; fill: #fff; stroke: #3a3a3a; stroke-width: 1.6px; overflow: visible; }
.rb.off { color: #999; }
.rb.off > svg { stroke: #999; }
.w36 { width: 36px; } .w44 { width: 44px; } .w46 { width: 46px; } .w48 { width: 48px; } .w52 { width: 52px; }
.w58 { width: 58px; } .w62 { width: 62px; } .w66 { width: 66px; } .w68 { width: 68px; } .w70 { width: 70px; } .w91 { width: 91px; }
.caret { display: inline-block; border: 3px solid transparent; border-top: 4px solid #1b6c96; border-bottom: 0; vertical-align: middle; }
.caret.inline { margin-left: 5px; }
.off .caret { border-top-color: #aaa; }
.icon-a { font: 10px "Open Sans", sans-serif; fill: #2a8fdc; stroke: none; }
.concept { font: bold 7px "Open Sans", sans-serif; text-anchor: middle; fill: #999; stroke: none; }
.concept.light { fill: #bbb; }
.stack { display: flex; flex-direction: column; width: 118px; padding-left: 6px; margin-top: -2px; }
.stack button { display: flex; align-items: center; gap: 4px; height: 22px; white-space: nowrap; }
.stack svg { width: 20px; height: 22px; fill: #fff; stroke: #333; }

/* work area */
.main { flex: 1; display: flex; min-height: 0; }
.left { flex: 1; min-width: 0; display: flex; flex-direction: column; }
.marking { height: 35px; flex: none; display: flex; align-items: center; padding-left: 4px; }
.marking button { width: 31px; display: flex; justify-content: center; }
.marking svg { width: 24px; height: 24px; fill: #7cbb4a; stroke: #444; stroke-width: 1.5px; }
.marking .gray svg { fill: #c4c4c4; stroke: #999; }
.grip { width: 2px; height: 22px; margin-right: 3px; background: repeating-linear-gradient(#222 0 2px, #fff 2px 4px); }
.viewport { flex: 1; position: relative; background: #c8c8fe; min-height: 0; }
.scene { position: absolute; inset: 0; width: 100%; height: 100%; }
.axes { position: absolute; right: 41px; bottom: 94px; }
.axis { font: 13px "Open Sans", sans-serif; }
.splitter { position: absolute; right: -5px; top: 396px; font-weight: bold; font-style: normal; color: #000; }
.ruler { height: 36px; flex: none; position: relative; border-top: 1px solid #667; background: linear-gradient(#f8f8fe, #c8c8fb); color: #112; }
.ruler ol { display: grid; grid-template-columns: 26px repeat(28, 1fr) 45px; font-size: 12px; line-height: 18px; text-align: center; }
.ruler li:first-child { text-align: left; padding-left: 2px; }
.wcs { position: absolute; left: 12px; top: 8px; width: 36px; height: 22px; border: 1px solid #eeeb80; color: #e9e78e; font-size: 13px; line-height: 20px; text-align: center; }
.status { height: 20px; flex: none; background: #2a97fd; color: #fff; padding-left: 6px; line-height: 20px; }

/* fix wizard */
.dialog { position: absolute; right: 53px; top: 54px; width: 493px; height: 584px; display: flex; flex-direction: column; background: #f0f0f0; border: 1px solid #8c8ca4; box-shadow: 2px 3px 10px rgba(30, 30, 80, .5); font: 11px/13px Roboto, sans-serif; color: #222; }
.dialog > header { display: flex; align-items: center; height: 30px; flex: none; background: #fff; padding: 0 0 0 10px; color: #999; font: 11px/13px "Open Sans", sans-serif; }
.dialog > header span { flex: 1; padding-left: 5px; }
.dialog > header button { width: 46px; display: flex; justify-content: center; }
.dbody { flex: 1; display: flex; padding: 4px 4px 4px 4px; }
.wiz { width: 121px; border: 2px solid #777; border-right-width: 1px; background: #fff; padding: 1px 5px 0 4px; font: 12px/20px "Open Sans", sans-serif; color: #111; height: 544px; }
.wiz a { display: flex; align-items: center; height: 21px; color: inherit; text-decoration: none; white-space: nowrap; }
.wiz a svg { width: 20px; height: 20px; }
.wiz span { flex: 1; padding-left: 2px; }
.wiz .sel span { background: #eee; }
.wiz hr { height: 1px; border: 0; background: #777; margin: 10px 0 10px -4px; }
.content { flex: 1; display: flex; flex-direction: column; padding-left: 8px; }
.current { display: flex; align-items: flex-start; padding-left: 4px; }
.current label { width: 73px; }
.selwrap { position: relative; width: 227px; margin-right: 5px; }
.selwrap select { appearance: none; width: 100%; height: 22px; border: 1px solid #aaa; border-radius: 0; background: #e1e1e1; font: inherit; color: #222; padding: 0 4px; display: block; }
.selwrap svg { position: absolute; right: 4px; top: 8px; }
.btn { height: 25px; border: 1px solid #a6a6a6; background: #e1e1e1; color: #222; }
.btn.next { width: 44px; height: 22px; color: #999; background: #ccc; border-color: #c0c0c0; margin-top: 1px; }
.panel { width: 350px; margin-top: 10px; border: 1px solid #9c9c9c; border-radius: 4px; background: linear-gradient(#fff, #f0f0f0); padding: 18px 9px 10px; }
fieldset { margin: 0; min-width: 0; border: 1px solid #dcdcdc; }
legend { padding: 0 4px 0 2px; margin-left: -4px; }
.advice { display: flex; height: 75px; padding: 6px 9px 8px 11px; margin-bottom: 6px; }
.advice p { flex: 1; white-space: nowrap; padding-top: 1px; }
.diag legend { margin-left: -2px; }
.sb { width: 16px; height: 46px; background: #eee; display: flex; flex-direction: column; justify-content: space-between; align-items: center; padding: 6px 0; }
.sb svg { fill: none; stroke: #aaa; stroke-width: 1.5px; }
.diag { padding: 6px 9px 8px; height: 269px; }
.full { display: flex; align-items: center; gap: 3px; height: 14px; }
input[type=checkbox] { appearance: none; width: 13px; height: 13px; margin: 0; border: 1px solid #333; background: #fff; flex: none; display: flex; justify-content: center; }
input[type=checkbox]:checked::after { content: ""; width: 4px; height: 8px; border: solid #333; border-width: 0 1px 1px 0; transform: rotate(40deg); }
.diag ul { padding: 12px 0 0 20px; }
.diag li { height: 20px; }
.diag li.in { padding-left: 20px; }
.diag li > * { display: flex; align-items: center; height: 20px; }
.nobox { width: 13px; }
.ok { width: 17px; height: 17px; margin: 0 4px 0 6px; fill: #1f8f4f; }
.diag b { width: 44px; }
.update { display: flex; align-items: center; width: 99px; height: 24px; margin: 11px 0 0 auto; padding-left: 2px; }
.update span { flex: 1; padding-right: 6px; }
.actions { display: flex; justify-content: flex-end; margin: auto 16px 0 0; }
.actions .btn { width: 58px; margin-left: 7px; }
.actions .follow { width: 150px; margin-left: 0; display: flex; align-items: center; padding-left: 3px; }
.follow span { flex: 1; padding-right: 8px; }
.resize { position: absolute; right: 0; bottom: 0; }

/* side panes */
.side { width: 334px; flex: none; position: relative; display: flex; flex-direction: column; padding: 1px 0 0 6px; font: 11px/13px Roboto, sans-serif; color: #111; }
.pane { height: 47px; flex: none; border: 1px solid #e4e4e4; border-width: 1px 0 0 1px; display: flex; flex-direction: column; }
.pane.grow { flex: 1; height: auto; min-height: 0; }
.pane header { display: flex; align-items: center; height: 26px; flex: none; padding: 0 6px 2px 7px; }
.play { width: 7px; height: 12px; background: #000; clip-path: polygon(0 0, 100% 50%, 0 100%); margin-right: 12px; flex: none; }
.play.open { width: 11px; height: 7px; clip-path: polygon(0 0, 100% 0, 50% 100%); margin: 0 10px 0 -2px; }
.dots { flex: 1; height: 5px; margin: 0 10px 0 6px; background-image: radial-gradient(circle at 1px 1px, #777 1px, transparent 1px), radial-gradient(circle at 1px 1px, #777 1px, transparent 1px); background-size: 4px 4px; background-position: 0 0, 2px 2px; }
.pane header button { width: 12px; font: bold 13px/12px Roboto, sans-serif; }
.pane header svg { margin-right: 10px; }
.ptabs { display: flex; height: 20px; flex: none; padding-left: 1px; position: relative; }
.ptabs > button { padding: 0 11px; white-space: nowrap; height: 20px; flex: none; }
.ptabs.wide > button { min-width: 59px; }
.ptabs > .active { border: 1px solid #999; border-bottom: 0; padding: 0 9px; min-width: 54px; }
.scroll { position: absolute; right: 2px; top: -2px; display: flex; }
.scroll button { width: 16px; height: 21px; border: 1px solid #999; background: #fff; display: flex; align-items: center; justify-content: center; margin-left: -1px; }
.scroll i { width: 6px; height: 12px; background: #000; clip-path: polygon(0 0, 100% 50%, 0 100%); }
.scroll button:disabled i { background: #aaa; clip-path: polygon(100% 0, 100% 100%, 0 50%); }
.count { text-align: right; padding-right: 3px; }
.list { flex: 1; margin: 5px 3px 0 1px; border: 1px solid #777; min-height: 0; }
table { width: 100%; table-layout: fixed; border-collapse: collapse; }
.c25 { width: 25px; } .c30 { width: 30px; } .c35 { width: 35px; } .c50 { width: 50px; } .c70 { width: 70px; }
th { height: 25px; padding: 1px 3px 0 0; font-weight: normal; border-right: 1px solid #e4e4e4; position: relative; white-space: nowrap; }
th.rest { border: 0; }
th.sorted { padding-right: 8px; }
th.sorted::before { content: ""; position: absolute; left: 32px; top: 3px; width: 5px; height: 5px; border: solid #777; border-width: 1px 0 0 1px; transform: rotate(45deg); }
td { height: 14px; padding: 0 3px 0 0; text-align: center; line-height: 12px; }
td:first-child { padding-right: 9px; }
td.name { text-align: left; padding-left: 3px; }
td > * { margin: 0 auto; }
td input[type=checkbox] { width: 11px; height: 11px; margin: 0 auto; }
td input[type=checkbox]:checked::after { height: 7px; border-width: 0 2px 2px 0; }
.shade { display: flex; align-items: flex-end; justify-content: center; }
.shade i { border: 3px solid transparent; border-top: 4px solid #559; border-bottom: 0; margin-left: 2px; }
.dot { display: block; width: 11px; height: 11px; border-radius: 50%; border: 1px solid #222; background: #c2c2c2; }
.dot.orange { background: #ee8330; }
.parttools { display: flex; align-items: center; height: 32px; flex: none; padding-left: 0; }
.parttools button { width: 31px; display: flex; justify-content: center; }
.parttools svg { width: 26px; height: 26px; }
.parttools .vsep { width: 1px; margin: 0 4px 0 3px; background: #777; height: 25px; }
.faded { opacity: .55; }
.watermark { position: absolute; left: 14px; bottom: 30px; display: flex; flex-direction: column; color: rgba(140, 140, 140, .7); font: 14px/18px "Open Sans", sans-serif; white-space: nowrap; pointer-events: none; }
.watermark strong { font: 19px/24px "Open Sans", sans-serif; }
```
